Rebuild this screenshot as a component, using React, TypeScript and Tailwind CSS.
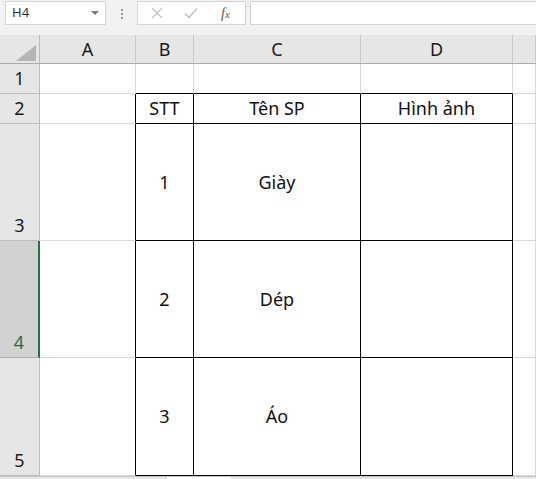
import React from 'react';

const cols = ['A', 'B', 'C', 'D', ''];

interface Row {
  num: string;
  h: string;
  cells: string[];
  selected?: boolean;
}

const rows: Row[] = [
  { num: '1', h: 'h-[30px]', cells: ['', '', '', '', ''] },
  { num: '2', h: 'h-[30px]', cells: ['', 'STT', 'Tên SP', 'Hình ảnh', ''] },
  { num: '3', h: 'h-[117px]', cells: ['', '1', 'Giày', '', ''] },
  { num: '4', h: 'h-[117px]', cells: ['', '2', 'Dép', '', ''], selected: true },
  { num: '5', h: 'h-[118px]', cells: ['', '3', 'Áo', '', ''] },
];

const FormulaBar: React.FC = () => (
  <div className="flex h-[35px] items-start bg-[#f1f1f1] pt-[1px]">
    <div className="ml-[5px] flex h-[24px] w-[101px] items-center justify-between border border-[#d6d6d6] bg-white pl-[6px] pr-[6px] text-[13px] text-[#333]">
      <span>H4</span>
      <span className="h-0 w-0 border-x-[4px] border-t-[4px] border-x-transparent border-t-[#777]" />
    </div>
    <div className="flex w-[31px] flex-col items-center gap-[2px] pt-[8px]">
      <span className="h-[2px] w-[2px] bg-[#9a9a9a]" />
      <span className="h-[2px] w-[2px] bg-[#9a9a9a]" />
      <span className="h-[2px] w-[2px] bg-[#9a9a9a]" />
    </div>
    <div className="flex h-[24px] w-[109px] items-center border border-[#d6d6d6] bg-white">
      <svg width="12" height="12" viewBox="0 0 12 12" className="ml-[13px]">
        <path d="M1 1 L11 11 M11 1 L1 11" stroke="#c4c4c4" strokeWidth="1.4" />
      </svg>
      <svg width="14" height="12" viewBox="0 0 14 12" className="ml-[21px]">
        <path d="M1 6.5 L5 10.5 L13 1.5" stroke="#c4c4c4" strokeWidth="1.6" fill="none" />
      </svg>
      <span
        className="ml-[23px] text-[14px] italic text-[#555]"
        style={{ fontFamily: '"Liberation Serif", serif' }}
      >
        f<span className="text-[11px]">x</span>
      </span>
    </div>
    <div className="ml-[4px] h-[24px] flex-1 border border-r-0 border-[#d6d6d6] bg-white" />
  </div>
);

const widths = ['w-[96px]', 'w-[58px]', 'w-[167px]', 'w-[152px]', 'flex-1'];

export default function App() {
  return (
    <div
      className="h-[479px] w-[536px] overflow-hidden bg-white text-black"
      style={{ fontFamily: '"Noto Sans", "Open Sans", sans-serif' }}
    >
      <FormulaBar />

      {/* column headers */}
      <div className="flex h-[29px] border-b border-[#ababab] bg-[#e6e6e6]">
        <div className="relative w-[40px] border-r border-[#bdbdbd]">
          <span className="absolute bottom-[2px] right-[3px] h-0 w-0 border-b-[16px] border-l-[20px] border-b-[#b5b5b5] border-l-transparent" />
        </div>
        {cols.map((c, i) => (
          <div
            key={i}
            className={`${widths[i]} flex items-center justify-center border-r border-[#c8c8c8] text-[18px] text-[#1a1a1a]`}
          >
            {c}
          </div>
        ))}
      </div>

      {/* rows */}
      {rows.map((r, ri) => (
        <div key={r.num} className={`flex ${r.h}`}>
          <div
            className={`flex w-[40px] justify-center pb-[1px] text-[18px] ${
              r.selected
                ? 'border-b border-r-2 border-b-[#ababab] border-r-[#217346] bg-[#d2d2d2] text-[#217346]'
                : 'border-b border-r border-[#bdbdbd] bg-[#e6e6e6] text-[#1a1a1a]'
            } ${ri < 2 ? 'items-center' : 'items-end'}`}
          >
            {r.num}
          </div>
          {r.cells.map((t, ci) => {
            const rightBlack = ri >= 1 && ci <= 3;
            const bottomBlack = ci >= 1 && ci <= 3;
            return (
              <div
                key={ci}
                className={`${widths[ci]} flex items-center justify-center border-b border-r text-[18px] text-[#111] ${
                  rightBlack ? 'border-r-black' : 'border-r-[#dadada]'
                } ${bottomBlack ? 'border-b-black' : 'border-b-[#dadada]'}`}
              >
                {t}
              </div>
            );
          })}
        </div>
      ))}

      {/* sheet tab strip */}
      <div className="flex h-[4px] border-t border-[#c6c6c6] bg-[#e6e6e6]">
        <div className="ml-[135px] w-[31px] border-r border-[#c6c6c6]" />
        <div className="w-[64px] bg-white" />
      </div>
    </div>
  );
}
